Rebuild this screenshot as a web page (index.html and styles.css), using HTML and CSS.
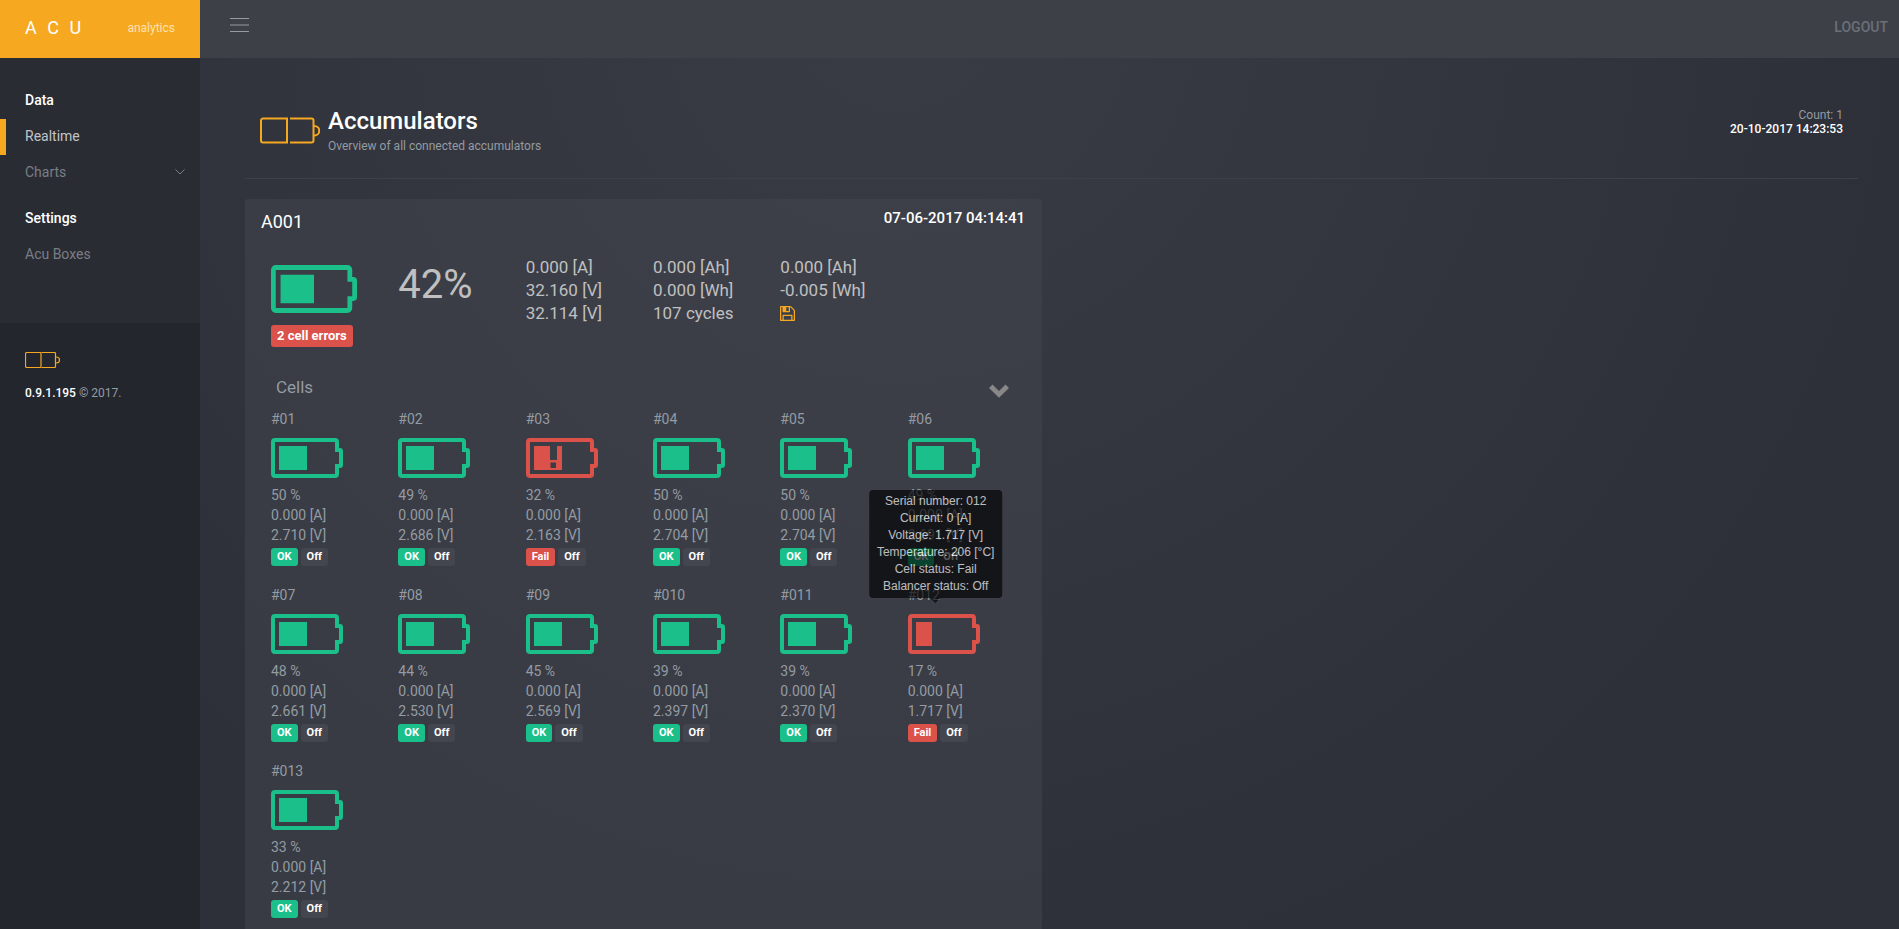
FILE: index.html
```html
<!DOCTYPE html>
<html lang="en">
<head>
<meta charset="utf-8">
<title>ACU analytics</title>
<link rel="stylesheet" href="styles.css">
</head>
<body>
<svg class="defs" width="0" height="0" aria-hidden="true">
  <symbol id="logo" viewBox="0 0 60 27"><path d="M27 1.500H3a2 2 0 0 0-2 2v20a2 2 0 0 0 2 2H27zM30 1.500h21.500a2 2 0 0 1 2 2v20a2 2 0 0 1-2 2H30M53.500 9h1a4.500 4.500 0 0 1 0 9.500h-1" fill="none" stroke="currentColor" stroke-width="2"/></symbol>
  <symbol id="shell" viewBox="0 0 72 40"><path d="M4 2H64a2 2 0 0 1 2 2V12H69a1 1 0 0 1 1 1V27a1 1 0 0 1-1 1H66V36a2 2 0 0 1-2 2H4a2 2 0 0 1-2-2V4a2 2 0 0 1 2-2z" fill="none" stroke="currentColor" stroke-width="4"/></symbol>
  <symbol id="half" viewBox="0 0 72 40"><use href="#shell"/><path d="M8 8H36V32H8z" fill="currentColor"/></symbol>
  <symbol id="low" viewBox="0 0 72 40"><use href="#shell"/><path d="M8 8H24V32H8z" fill="currentColor"/></symbol>
  <symbol id="alert" viewBox="0 0 72 40"><use href="#shell"/><path fill-rule="evenodd" d="M8 8H24V22H31V8H36V32H8zM24.500 24.500V30H30V24.500z" fill="currentColor"/></symbol>
</svg>
<div class="layout">
  <aside class="sidebar">
    <a class="brand" href="#"><span class="brand-name">A C U</span><span class="brand-tag">analytics</span></a>
    <nav class="nav">
      <h2 class="nav-title">Data</h2>
      <a class="nav-link active" href="#">Realtime</a>
      <a class="nav-link" href="#">Charts <svg width="10" height="6" viewBox="0 0 10 6"><path d="M.5.5 5 5 9.500.5" fill="none" stroke="currentColor"/></svg></a>
      <h2 class="nav-title spaced">Settings</h2>
      <a class="nav-link" href="#">Acu Boxes</a>
    </nav>
    <footer class="side-foot">
      <svg class="small-logo" width="35" height="16" viewBox="0 0 35 16"><path d="M16 .5H2Q.5.5.5 2V14q0 1.500 1.500 1.500H16zM17 .5H29.500q1 0 1 1V14.500q0 1-1 1H17M30.500 5h1a2.800 2.800 0 0 1 0 6h-1" fill="none" stroke="currentColor" stroke-width="1.200"/></svg>
      <p><b>0.9.1.195</b> © 2017.</p>
    </footer>
  </aside>
  <div class="page">
    <header class="topbar">
      <button class="menu" type="button" aria-label="Toggle menu"><svg width="20" height="16" viewBox="0 0 20 16"><path d="M0 1.500h19M0 8h19M0 14.500h19" fill="none" stroke="currentColor" stroke-width="1.200"/></svg></button>
      <a class="logout" href="#">LOGOUT</a>
    </header>
    <main class="content">
      <header class="title-bar">
        <svg class="title-logo" width="60" height="27"><use href="#logo"/></svg>
        <div><h1>Accumulators</h1><p class="sub">Overview of all connected accumulators</p></div>
        <div class="stamp">Count: 1<br><b>20-10-2017 14:23:53</b></div>
      </header>
      <div class="cards">
        <section class="card">
          <header class="card-head"><h2>A001</h2><time>07-06-2017 04:14:41</time></header>
          <div class="summary">
            <div class="state"><svg class="ok" width="86" height="48"><use href="#half"/></svg><span class="badge big fail-bg">2 cell errors</span></div>
            <div class="level">42%</div>
            <div>0.000 [A]<br>32.160 [V]<br>32.114 [V]</div>
            <div>0.000 [Ah]<br>0.000 [Wh]<br>107 cycles</div>
            <div>0.000 [Ah]<br>-0.005 [Wh]<br><button class="save" type="button" aria-label="Save"><svg width="15" height="15" viewBox="128 128 1536 1536"><path fill="currentColor" d="M512 1536h768v-384h-768v384zm896 0h128v-896q0-14-10-38.500t-20-34.500l-281-281q-10-10-34-20t-39-10v416q0 40-28 68t-68 28h-576q-40 0-68-28t-28-68v-416h-128v1280h128v-416q0-40 28-68t68-28h832q40 0 68 28t28 68v416zm-384-928v-320q0-13-9.500-22.500t-22.500-9.500h-192q-13 0-22.500 9.500t-9.500 22.500v320q0 13 9.500 22.500t22.500 9.500h192q13 0 22.500-9.500t9.500-22.500zm640 32v928q0 40-28 68t-68 28h-1344q-40 0-68-28t-28-68v-1344q0-40 28-68t68-28h928q40 0 88 20t76 48l280 280q28 28 48 76t20 88z"/></svg></button></div>
          </div>
          <div class="cells-head"><h3>Cells</h3><button class="collapse" type="button" aria-label="Collapse cells"><svg width="20" height="14" viewBox="0 0 20 14"><path d="M3.500.5 10 7 16.500.5 20 4 10 13.800 0 4z" fill="currentColor"/></svg></button></div>
          <div class="cells">
            <article class="cell"><h4>#01</h4><svg class="ok" width="72" height="40"><use href="#half"/></svg><p>50 %<br>0.000 [A]<br>2.710 [V]</p><div class="tags"><span class="badge ok-bg">OK</span><span class="badge">Off</span></div></article>
            <article class="cell"><h4>#02</h4><svg class="ok" width="72" height="40"><use href="#half"/></svg><p>49 %<br>0.000 [A]<br>2.686 [V]</p><div class="tags"><span class="badge ok-bg">OK</span><span class="badge">Off</span></div></article>
            <article class="cell"><h4>#03</h4><svg class="fail" width="72" height="40"><use href="#alert"/></svg><p>32 %<br>0.000 [A]<br>2.163 [V]</p><div class="tags"><span class="badge fail-bg">Fail</span><span class="badge">Off</span></div></article>
            <article class="cell"><h4>#04</h4><svg class="ok" width="72" height="40"><use href="#half"/></svg><p>50 %<br>0.000 [A]<br>2.704 [V]</p><div class="tags"><span class="badge ok-bg">OK</span><span class="badge">Off</span></div></article>
            <article class="cell"><h4>#05</h4><svg class="ok" width="72" height="40"><use href="#half"/></svg><p>50 %<br>0.000 [A]<br>2.704 [V]</p><div class="tags"><span class="badge ok-bg">OK</span><span class="badge">Off</span></div></article>
            <article class="cell"><h4>#06</h4><svg class="ok" width="72" height="40"><use href="#half"/></svg><p>49 %<br>0.000 [A]<br>2.691 [V]</p><div class="tags"><span class="badge ok-bg">OK</span><span class="badge">Off</span></div></article>
            <article class="cell"><h4>#07</h4><svg class="ok" width="72" height="40"><use href="#half"/></svg><p>48 %<br>0.000 [A]<br>2.661 [V]</p><div class="tags"><span class="badge ok-bg">OK</span><span class="badge">Off</span></div></article>
            <article class="cell"><h4>#08</h4><svg class="ok" width="72" height="40"><use href="#half"/></svg><p>44 %<br>0.000 [A]<br>2.530 [V]</p><div class="tags"><span class="badge ok-bg">OK</span><span class="badge">Off</span></div></article>
            <article class="cell"><h4>#09</h4><svg class="ok" width="72" height="40"><use href="#half"/></svg><p>45 %<br>0.000 [A]<br>2.569 [V]</p><div class="tags"><span class="badge ok-bg">OK</span><span class="badge">Off</span></div></article>
            <article class="cell"><h4>#010</h4><svg class="ok" width="72" height="40"><use href="#half"/></svg><p>39 %<br>0.000 [A]<br>2.397 [V]</p><div class="tags"><span class="badge ok-bg">OK</span><span class="badge">Off</span></div></article>
            <article class="cell"><h4>#011</h4><svg class="ok" width="72" height="40"><use href="#half"/></svg><p>39 %<br>0.000 [A]<br>2.370 [V]</p><div class="tags"><span class="badge ok-bg">OK</span><span class="badge">Off</span></div></article>
            <article class="cell"><h4>#012</h4><div class="tip-anchor"><svg class="fail" width="72" height="40"><use href="#low"/></svg><div class="tooltip" role="tooltip">Serial number: 012<br>Current: 0 [A]<br>Voltage: 1.717 [V]<br>Temperature: 206 [°C]<br>Cell status: Fail<br>Balancer status: Off</div></div><p>17 %<br>0.000 [A]<br>1.717 [V]</p><div class="tags"><span class="badge fail-bg">Fail</span><span class="badge">Off</span></div></article>
            <article class="cell"><h4>#013</h4><svg class="ok" width="72" height="40"><use href="#half"/></svg><p>33 %<br>0.000 [A]<br>2.212 [V]</p><div class="tags"><span class="badge ok-bg">OK</span><span class="badge">Off</span></div></article>
          </div>
        </section>
      </div>
    </main>
  </div>
</div>
</body>
</html>
```
FILE: styles.css
```css
* { box-sizing: border-box; }
html { scrollbar-width: none; }
body {
  margin: 0;
  font: 14px/20px Roboto, sans-serif;
  color: #949ba2;
  background: radial-gradient(ellipse 1000px 1000px at 900px 0, #393c44 0, #2d3038 100%) fixed #2d3038;
}
h1, h2, h3, h4, p { margin: 0; font-weight: 400; }
a { color: inherit; text-decoration: none; }
b { font-weight: 500; color: #fff; }
button { padding: 0; border: 0; background: none; color: inherit; font: inherit; cursor: pointer; }
svg { display: block; }
.defs { position: absolute; }
.layout { display: flex; min-height: 100vh; }

.sidebar { flex: 0 0 200px; display: flex; flex-direction: column; background: #24262d; }
.brand {
  display: flex; align-items: center; justify-content: space-between;
  height: 58px; padding: 0 25px 2px; background: #f6a821; color: #fff;
}
.brand-name { font-size: 18px; letter-spacing: 3px; }
.brand-tag { font-size: 12px; color: #fde2b0; }
.nav { padding: 25px 0 50px; background: #2a2c34; }
.nav-title, .nav-link { display: flex; align-items: center; justify-content: space-between; height: 36px; padding: 0 15px 2px 25px; font-size: 14px; }
.nav-title { color: #fff; font-weight: 500; }
.nav-title.spaced { margin-top: 10px; }
.nav-link { color: #7a7e84; }
.nav-link.active { padding-left: 19px; border-left: 6px solid #f6a821; color: #c0c4c8; }
.side-foot { padding: 29px 25px; font-size: 12px; }
.small-logo { margin-bottom: 15px; color: #f6a821; }

.page { flex: 1; min-width: 0; }
.topbar { display: flex; align-items: center; justify-content: space-between; height: 58px; padding: 0 11px 4px 30px; background: #3e4048; }
.menu { padding-bottom: 4px; }
.logout { color: #6a7078; font-weight: 500; }
.content { padding: 42px 30px 0 45px; }
.title-bar { display: flex; align-items: flex-start; height: 79px; margin: 0 11px 20px 0; padding: 6px 15px 0; border-bottom: 1px solid #3d404c; }
.title-logo { margin: 11px 8px 0 0; color: #f6a821; }
h1 { font-size: 24px; line-height: 30px; font-weight: 500; color: #fff; }
.sub { font-size: 12px; }
.stamp { margin-left: auto; padding-top: 2px; font-size: 12px; line-height: 14px; text-align: right; }

.cards { display: grid; grid-template-columns: 1fr 1fr; gap: 30px; align-items: start; }
.card { padding: 10px 7px 16px 26px; border-radius: 3px; background: rgba(68, 70, 79, 0.5); }
.card-head { display: flex; justify-content: space-between; margin: 0 10px 0 -10px; color: #fff; }
.card-head h2 { font-size: 18px; line-height: 26px; }
.card-head time { font-size: 15px; font-weight: 500; line-height: 18px; }
.summary, .cells { display: grid; grid-template-columns: repeat(6, 1fr); }
.summary { margin-top: 21px; font-size: 17px; line-height: 23px; color: #c0c0c0; }
.state { display: grid; justify-items: start; gap: 12px; padding-top: 9px; }
.level { font-size: 40px; line-height: 58px; }
.save { display: block; margin-top: 4px; color: #f6a821; }
.cells-head { display: flex; align-items: center; justify-content: space-between; margin: 28px 26px 0 5px; }
.cells-head h3 { font-size: 17px; line-height: 24px; }
.collapse { padding-top: 7px; color: #888; }
.cells { margin-top: 10px; row-gap: 19px; }
.cell h4 { margin-bottom: 9px; font-size: 14px; line-height: 20px; }
.cell p { margin: 7px 0 3px; }
.tags { display: flex; gap: 3px; }
.badge { padding: 0 6px; border-radius: 3px; background: #44464f; color: #fff; font-size: 11px; font-weight: 700; line-height: 18px; }
.badge.big { padding: 0 6px; font-size: 13px; line-height: 22px; }
.ok { color: #1bbf89; }
.fail { color: #db524b; }
.ok-bg { background: #1bbf89; }
.fail-bg { background: #db524b; }

.tip-anchor { position: relative; width: 56px; }
.tip-anchor svg { overflow: visible; }
.tooltip {
  position: absolute; left: 50%; bottom: 100%; margin-bottom: 16px; transform: translateX(-50%);
  padding: 3px 8px; border-radius: 4px; background: #000; color: #fff; opacity: 0.65;
  font: 12px/17px "Liberation Sans", Arial, sans-serif; text-align: center; white-space: nowrap;
}
.tooltip::after { content: ""; position: absolute; top: 100%; left: 50%; margin-left: -5px; border: 5px solid transparent; border-top-color: #000; border-bottom: 0; }
```
